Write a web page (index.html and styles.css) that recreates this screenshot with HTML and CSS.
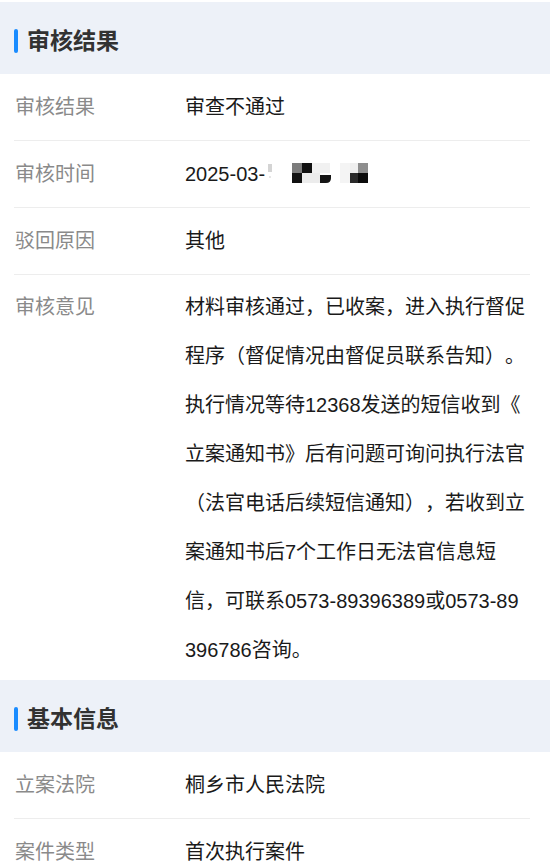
FILE: index.html
```html
<!DOCTYPE html>
<html lang="zh-CN">
<head>
<meta charset="utf-8">
<title>审核结果</title>
<link rel="stylesheet" href="styles.css">
</head>
<body>
<div class="page">
  <div class="head"><span class="bar"></span><span class="title">审核结果</span></div>
  <div class="row"><div class="label">审核结果</div><div class="value">审查不通过</div></div>
  <div class="row"><div class="label">审核时间</div><div class="value">2025-03-<svg class="mosaic" width="108" height="22" viewBox="0 0 108 22"><rect x="6" y="2" width="4" height="8" fill="#d4d4d4"/><rect x="7" y="14" width="2" height="2" fill="#e6e6e6"/><rect x="30" y="1" width="10" height="10" fill="#7c7c7c"/><rect x="40" y="1" width="10" height="10" fill="#111"/><rect x="50" y="1" width="18" height="10" fill="#f1f1f1"/><rect x="30" y="11" width="10" height="10" fill="#111"/><rect x="40" y="11" width="18" height="10" fill="#ececec"/><path d="M58 13 H69 V16 Q69 21 64 21 H58 Z" fill="#151515"/><rect x="78" y="1" width="10" height="20" fill="#f4f4f4"/><rect x="88" y="1" width="8" height="10" fill="#efefef"/><rect x="96" y="1" width="10" height="10" fill="#8e8e8e"/><rect x="88" y="11" width="8" height="10" fill="#2b2b2b"/><rect x="96" y="11" width="10" height="10" fill="#0b0b0b"/></svg></div></div>
  <div class="row"><div class="label">驳回原因</div><div class="value">其他</div></div>
  <div class="row row-multi"><div class="label">审核意见</div><div class="value">材料审核通过，已收案，进入执行督促程序（督促情况由督促员联系告知）。执行情况等待12368发送的短信收到《<wbr>立案通知书》后有问题可询问执行法官（法官电话后续短信通知），若收到立案通知书后7个工作日无法官信息短信，可联系0573-89396389或0573-89396786咨询。</div></div>
  <div class="head"><span class="bar"></span><span class="title">基本信息</span></div>
  <div class="row"><div class="label">立案法院</div><div class="value">桐乡市人民法院</div></div>
  <div class="row"><div class="label">案件类型</div><div class="value">首次执行案件</div></div>
</div>
</body>
</html>
```
FILE: styles.css
```css
html, body {
  margin: 0;
  padding: 0;
  background: #ffffff;
}
body {
  font-family: "Liberation Sans", "Noto Sans CJK SC", sans-serif;
  text-spacing-trim: space-all;
  -webkit-font-smoothing: antialiased;
}
.page {
  padding-top: 2px;
  width: 550px;
  overflow: hidden;
}
.head {
  box-sizing: border-box;
  height: 72px;
  padding-top: 6px;
  padding-left: 14px;
  display: flex;
  align-items: center;
  background: #edf1f8;
}
.bar {
  width: 4px;
  height: 24px;
  border-radius: 2px;
  background: #1a8cff;
  margin-right: 9px;
}
.title {
  font-size: 23px;
  font-weight: 700;
  color: #323232;
  line-height: 1;
}
.row {
  box-sizing: border-box;
  height: 67px;
  margin: 0 20px 0 14px;
  border-bottom: 1px solid #ededed;
  display: flex;
  align-items: center;
  font-size: 20px;
  line-height: 28px;
}
.label {
  flex: 0 0 170px;
  padding-left: 1px;
  color: #8a8a8a;
}
.value {
  flex: 0 0 342px;
  color: #1a1a1a;
  word-break: break-all;
}
.row-multi {
  height: auto;
  align-items: flex-start;
  padding: 8px 0 5px;
  border-bottom: none;
  line-height: 49px;
}
.mosaic {
  vertical-align: -3px;
  margin-left: -3px;
}
```
